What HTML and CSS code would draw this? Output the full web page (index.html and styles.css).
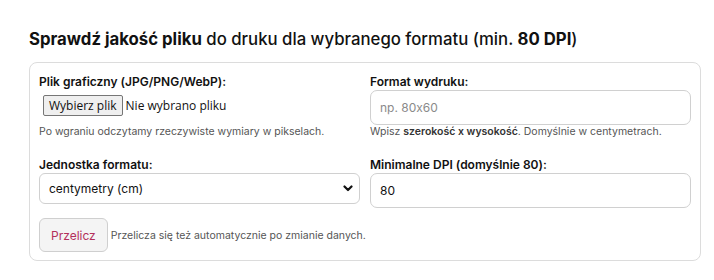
FILE: index.html
```html
<!DOCTYPE html>
<html lang="pl">
<head>
<meta charset="utf-8">
<title>Sprawdź jakość pliku</title>
<link rel="stylesheet" href="styles.css">
</head>
<body>
<div class="wrap">
  <h2 class="title"><strong>Sprawdź jakość pliku</strong> do druku dla wybranego formatu (min. <strong>80 DPI</strong>)</h2>
  <form class="card" onsubmit="return false">
    <div class="grid">
      <div class="field">
        <div class="label">Plik graficzny (JPG/PNG/WebP):</div>
        <label class="file">
          <input type="file" class="file-input" accept="image/*">
          <span class="file-btn">Wybierz plik</span>
          <span class="file-name">Nie wybrano pliku</span>
        </label>
        <div class="help help-file">Po wgraniu odczytamy rzeczywiste wymiary w pikselach.</div>
      </div>
      <div class="field">
        <div class="label">Format wydruku:</div>
        <input class="input" type="text" placeholder="np. 80x60">
        <div class="help">Wpisz <b>szerokość x wysokość</b>. Domyślnie w centymetrach.</div>
      </div>
      <div class="field">
        <div class="label">Jednostka formatu:</div>
        <div class="select-wrap">
          <select class="select">
            <option>centymetry (cm)</option>
            <option>milimetry (mm)</option>
            <option>cale (in)</option>
          </select>
          <svg class="chev" width="10" height="7" viewBox="0 0 10 7"><path d="M1.5 1.5 L5 5 L8.5 1.5" fill="none" stroke="#111" stroke-width="2.2" stroke-linecap="round" stroke-linejoin="round"/></svg>
        </div>
      </div>
      <div class="field">
        <div class="label">Minimalne DPI (domyślnie 80):</div>
        <input class="input" type="text" value="80">
      </div>
    </div>
    <div class="actions">
      <button class="btn" type="button">Przelicz</button>
      <span class="note">Przelicza się też automatycznie po zmianie danych.</span>
    </div>
  </form>
</div>
</body>
</html>
```

FILE: styles.css
```css
* { box-sizing: border-box; }
body {
  margin: 0;
  background: #fff;
  font-family: Inter, "Noto Sans", sans-serif;
  font-feature-settings: "calt" 0;
  color: #111;
}
.wrap {
  width: 672px;
  margin-left: 29px;
  padding-top: 27px;
}
.title {
  margin: 0 0 11px;
  font-size: 16.75px;
  line-height: 24px;
  font-weight: 500;
  color: #111;
}
.title strong { font-weight: 700; }
.card {
  border: 1px solid #dcdcdc;
  border-radius: 8px;
  padding: 11px 9px 8px 9px;
}
.grid {
  display: grid;
  grid-template-columns: 1fr 1fr;
  column-gap: 10px;
  row-gap: 18px;
}
.field { display: flex; flex-direction: column; align-items: stretch; }
.label {
  font-size: 12px;
  line-height: 16px;
  font-weight: 600;
  color: #111;
}
.file {
  display: flex;
  align-items: center;
  margin: 5px 0 9px 4px;
  height: 21px;
  font-family: "Open Sans", "Liberation Sans", sans-serif;
  font-size: 12px;
  color: #111;
  cursor: pointer;
}
.file-input { display: none; }
.file-btn {
  height: 21px;
  line-height: 19px;
  padding: 0 5px;
  background: #efefef;
  border: 1px solid #767676;
  border-radius: 2px;
}
.file-name { margin-left: 3px; }
.help {
  font-size: 10.5px;
  line-height: 14px;
  color: #555;
}
.help b { font-weight: 600; color: #333; }
.input {
  height: 35px;
  border: 1px solid #d0d0d0;
  border-radius: 7px;
  padding: 0 9px;
  font-family: Inter, "Noto Sans", sans-serif;
  font-feature-settings: "calt" 0;
  font-size: 12px;
  color: #111;
  background: #fff;
  outline: none;
}
.input::placeholder { color: #8a8a8a; }
.select-wrap { position: relative; }
.select {
  appearance: none;
  -webkit-appearance: none;
  width: 100%;
  height: 31px;
  border: 1px solid #d0d0d0;
  border-radius: 6px;
  padding: 0 9px;
  font-family: Inter, "Noto Sans", sans-serif;
  font-size: 12px;
  color: #111;
  background: #fff;
  outline: none;
}
.chev {
  position: absolute;
  right: 7px;
  top: 12px;
  pointer-events: none;
}
.actions {
  display: flex;
  align-items: center;
  margin-top: 10px;
}
.btn {
  height: 34px;
  padding: 0 11px;
  background: #f4f4f4;
  border: 1px solid #cfcfcf;
  border-radius: 6px;
  font-family: Inter, "Noto Sans", sans-serif;
  font-size: 12px;
  color: #b3305b;
  cursor: pointer;
}
.note {
  margin-left: 3px;
  font-size: 10.5px;
  color: #555;
}
```
